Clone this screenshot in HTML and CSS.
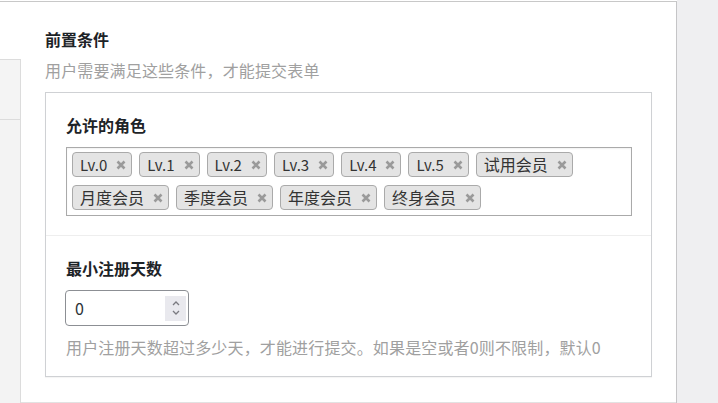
FILE: index.html
```html
<!DOCTYPE html>
<html lang="zh-CN">
<head>
<meta charset="utf-8">
<title>前置条件</title>
<link rel="stylesheet" href="styles.css">
</head>
<body>
<div class="page">
  <div class="panel">
    <div class="side">
      <div class="side-top"></div>
      <div class="side-nav">
        <div class="side-item"></div>
      </div>
    </div>
    <div class="content">
      <h2 class="title">前置条件</h2>
      <p class="subtitle">用户需要满足这些条件，才能提交表单</p>
      <div class="box">
        <div class="field">
          <div class="label">允许的角色</div>
          <div class="select">
            <span class="tag tag-latin">Lv.0<svg class="x" viewBox="0 0 10 10"><path d="M1.5 1.5 8.5 8.5M8.5 1.5 1.5 8.5"/></svg></span>
            <span class="tag tag-latin">Lv.1<svg class="x" viewBox="0 0 10 10"><path d="M1.5 1.5 8.5 8.5M8.5 1.5 1.5 8.5"/></svg></span>
            <span class="tag tag-latin">Lv.2<svg class="x" viewBox="0 0 10 10"><path d="M1.5 1.5 8.5 8.5M8.5 1.5 1.5 8.5"/></svg></span>
            <span class="tag tag-latin">Lv.3<svg class="x" viewBox="0 0 10 10"><path d="M1.5 1.5 8.5 8.5M8.5 1.5 1.5 8.5"/></svg></span>
            <span class="tag tag-latin">Lv.4<svg class="x" viewBox="0 0 10 10"><path d="M1.5 1.5 8.5 8.5M8.5 1.5 1.5 8.5"/></svg></span>
            <span class="tag tag-latin">Lv.5<svg class="x" viewBox="0 0 10 10"><path d="M1.5 1.5 8.5 8.5M8.5 1.5 1.5 8.5"/></svg></span>
            <span class="tag">试用会员<svg class="x" viewBox="0 0 10 10"><path d="M1.5 1.5 8.5 8.5M8.5 1.5 1.5 8.5"/></svg></span>
            <span class="tag">月度会员<svg class="x" viewBox="0 0 10 10"><path d="M1.5 1.5 8.5 8.5M8.5 1.5 1.5 8.5"/></svg></span>
            <span class="tag">季度会员<svg class="x" viewBox="0 0 10 10"><path d="M1.5 1.5 8.5 8.5M8.5 1.5 1.5 8.5"/></svg></span>
            <span class="tag">年度会员<svg class="x" viewBox="0 0 10 10"><path d="M1.5 1.5 8.5 8.5M8.5 1.5 1.5 8.5"/></svg></span>
            <span class="tag">终身会员<svg class="x" viewBox="0 0 10 10"><path d="M1.5 1.5 8.5 8.5M8.5 1.5 1.5 8.5"/></svg></span>
          </div>
        </div>
        <div class="field field-second">
          <div class="label">最小注册天数</div>
          <div class="number">
            <span class="number-value">0</span>
            <span class="spin">
              <svg viewBox="0 0 12 22"><path d="M3 8 6 5 9 8M3 14 6 17 9 14"/></svg>
            </span>
          </div>
          <p class="help">用户注册天数超过多少天，才能进行提交。如果是空或者0则不限制，默认0</p>
        </div>
      </div>
    </div>
  </div>
  <div class="outside"></div>
</div>
</body>
</html>
```

FILE: styles.css
```css
html, body {
  margin: 0;
  padding: 0;
  background: #ffffff;
}

body {
  font-family: "Noto Sans CJK SC", "Noto Sans", sans-serif;
  color: #1d2327;
}

.page {
  display: flex;
  height: 403px;
  overflow: hidden;
}

.panel {
  box-sizing: border-box;
  width: 677px;
  height: 402px;
  margin-top: 1px;
  border-top: 1px solid #c8c8c8;
  border-right: 1px solid #c5c5c7;
  display: flex;
  background: #ffffff;
}

.outside {
  flex: 1;
  background: #efeff1;
}

.side {
  width: 21px;
  display: flex;
  flex-direction: column;
}

.side-top {
  height: 57px;
}

.side-nav {
  flex: 1;
  border-top: 1px solid #dcdcdc;
  border-right: 1px solid #dcdcdc;
  background: #f3f3f3;
}

.side-item {
  height: 59px;
  border-bottom: 1px solid #dcdcdc;
  background: #f4f4f4;
}

.content {
  flex: 1;
  border-bottom: 1px solid #e2e2e2;
  padding: 25px 24px 0;
}

.title {
  margin: 0 0 7px;
  font-size: 16px;
  line-height: 24px;
  font-weight: 700;
  color: #1d2327;
}

.subtitle {
  margin: 0;
  font-size: 16px;
  line-height: 24px;
  color: #a0a0a0;
  letter-spacing: 0.15px;
}

.box {
  margin-top: 10px;
  border: 1px solid #cfd1d4;
  box-shadow: 0 1px 1px rgba(0, 0, 0, 0.04);
}

.field {
  padding: 20px 19px 19px 20px;
}

.field-second {
  border-top: 1px solid #eeeeee;
  padding-bottom: 17px;
}

.label {
  font-size: 16px;
  line-height: 24px;
  font-weight: 700;
  color: #1d2327;
  margin-bottom: 10px;
}

.select {
  border: 1px solid #aaaaaa;
  padding: 4px 5px 5px 5px;
  display: flex;
  flex-wrap: wrap;
  gap: 8px 7px;
  box-shadow: inset 0 1px 2px rgba(0, 0, 0, 0.06);
}

.tag {
  display: flex;
  align-items: center;
  gap: 9px;
  height: 25px;
  box-sizing: border-box;
  padding: 0 5px 0 7px;
  background: #e4e4e4;
  border: 1px solid #aaaaaa;
  border-radius: 4px;
  font-size: 16px;
  line-height: 23px;
  color: #333333;
}

.tag-latin {
  font-size: 15px;
}

.x {
  width: 10px;
  height: 10px;
  fill: none;
  stroke: #9a9a9a;
  stroke-width: 2.6;
}

.number {
  box-sizing: border-box;
  width: 124px;
  height: 36px;
  border: 1px solid #8c8f94;
  border-radius: 4px;
  display: flex;
  align-items: center;
  padding: 0 2px 0 9px;
  margin-left: -1px;
}

.number-value {
  flex: 1;
  font-size: 16px;
  color: #2c3338;
}

.spin {
  width: 21px;
  height: 25px;
  background: #e9e9ee;
  display: flex;
  align-items: center;
  justify-content: center;
}

.spin svg {
  width: 12px;
  height: 22px;
  fill: none;
  stroke: #7a7a80;
  stroke-width: 1.3;
}

.help {
  margin: 9px 0 0;
  font-size: 16px;
  line-height: 24px;
  color: #a0a0a0;
  letter-spacing: 0.15px;
}
```
